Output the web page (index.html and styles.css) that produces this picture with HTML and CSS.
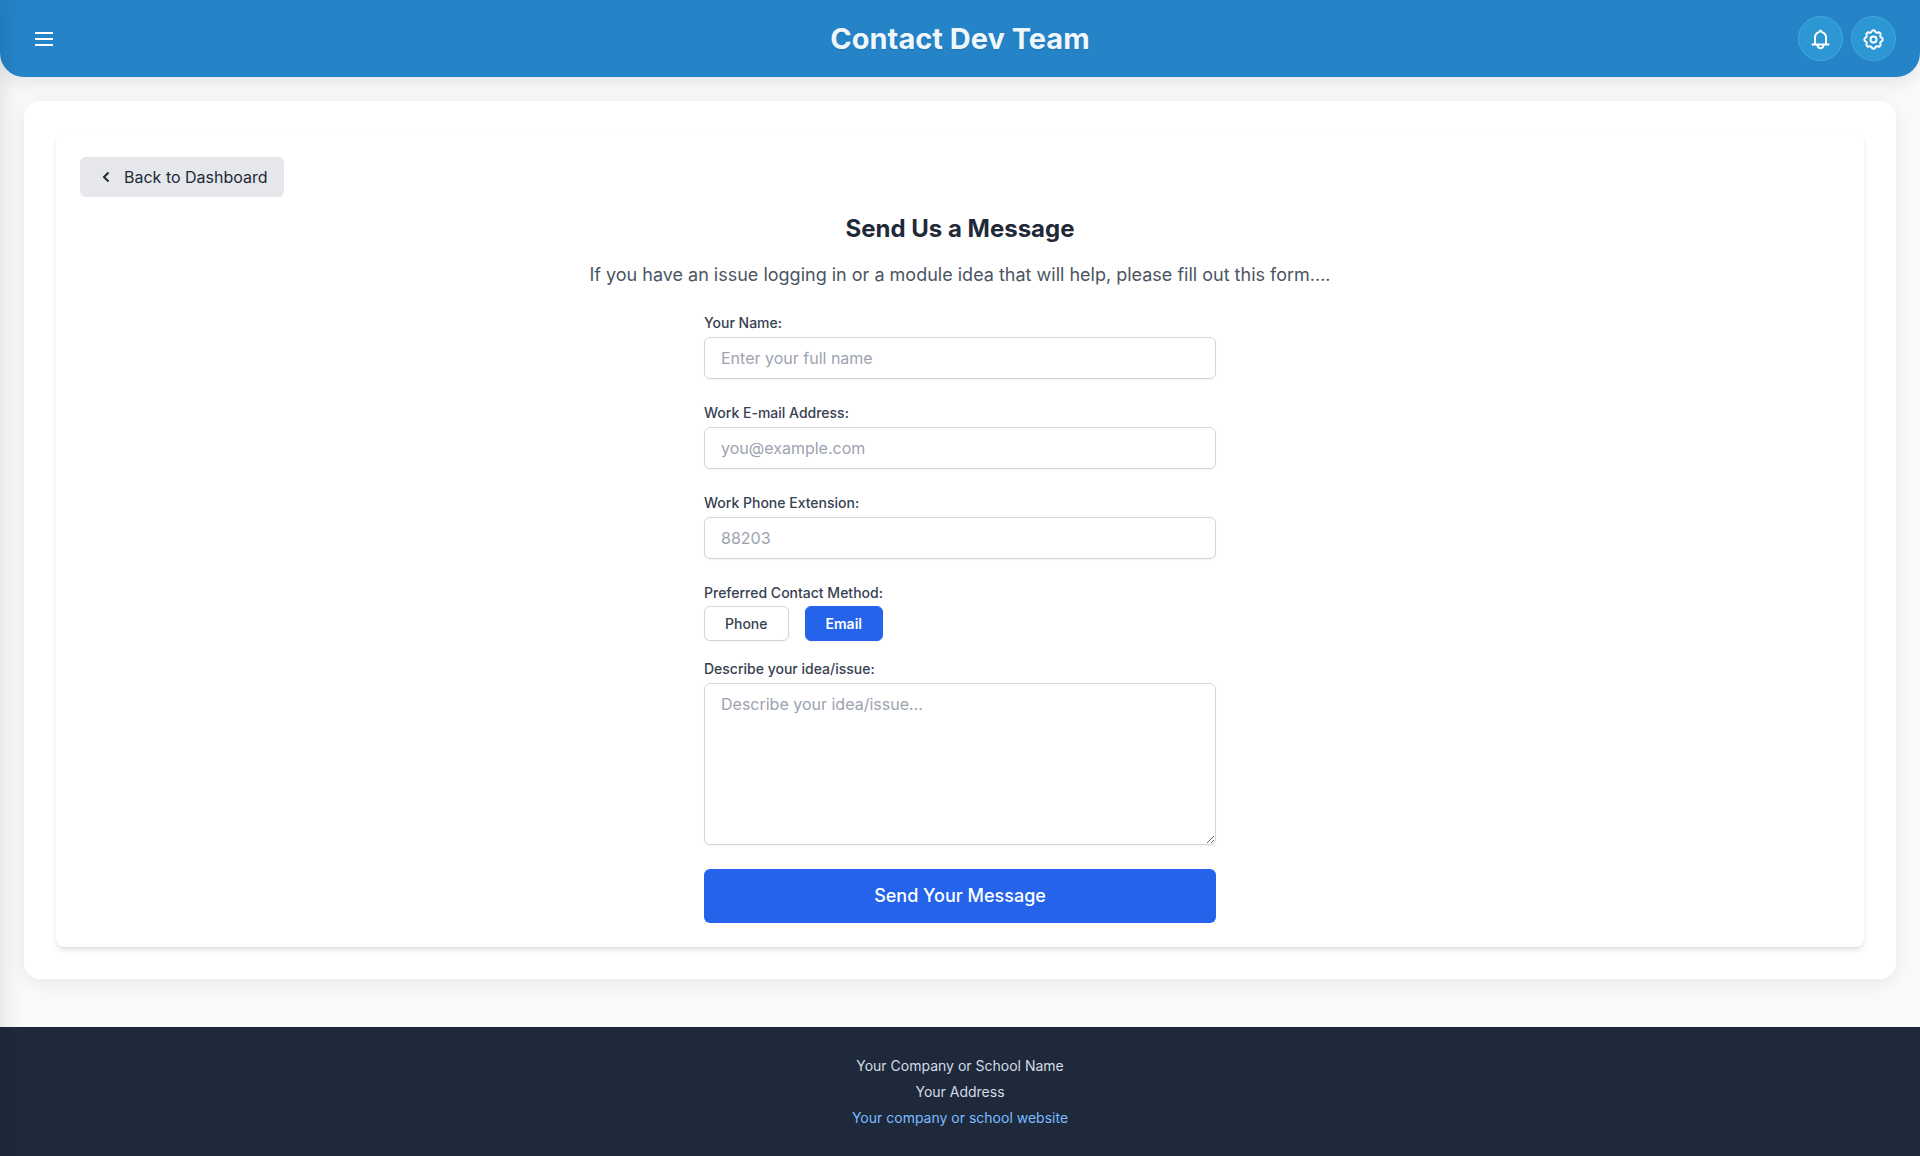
FILE: index.html
```html
<!doctype html>
<html lang="en">
<head>
	<meta charset="utf-8">
	<meta name="viewport" content="width=device-width, initial-scale=1">
	<title>Contact Dev Team</title>
	<link rel="stylesheet" href="styles.css">
</head>
<body>
	<aside class="sidebar" aria-hidden="true"></aside>

	<header class="header">
		<button class="menu-btn" type="button" aria-label="Open menu">
			<svg width="24" height="24" viewBox="0 0 24 24" fill="none" stroke="currentColor" stroke-width="2">
				<path d="M3 6h18M3 12h18M3 18h18"/>
			</svg>
		</button>
		<h1 class="header-title">Contact Dev Team</h1>
		<div class="header-actions">
			<button class="icon-btn" type="button" aria-label="Notifications">
				<svg width="24" height="24" viewBox="0.5 -0.5 24 24" fill="none" stroke="currentColor" stroke-width="2" stroke-linecap="round" stroke-linejoin="round">
					<path d="M4 17h16M6.500 17v-6.500C6.500 7.200 8.200 5.200 10.500 4.600L12 3l1.500 1.600C15.800 5.200 17.500 7.200 17.500 10.500V17M9 17.500a3 3.300 0 0 0 6 0"/>
				</svg>
			</button>
			<button class="icon-btn" type="button" aria-label="Settings">
				<svg width="24" height="24" viewBox="0.5 -0.5 24 24" fill="none" stroke="currentColor" stroke-width="2" stroke-linejoin="round">
					<path d="M10.160 4.010A2 2 0 0 1 13.840 4.010A1.800 1.800 0 0 0 16.350 5.050A2 2 0 0 1 18.950 7.650A1.800 1.800 0 0 0 19.990 10.160A2 2 0 0 1 19.990 13.840A1.800 1.800 0 0 0 18.950 16.350A2 2 0 0 1 16.350 18.950A1.800 1.800 0 0 0 13.840 19.990A2 2 0 0 1 10.160 19.990A1.800 1.800 0 0 0 7.650 18.950A2 2 0 0 1 5.050 16.350A1.800 1.800 0 0 0 4.010 13.840A2 2 0 0 1 4.010 10.160A1.800 1.800 0 0 0 5.050 7.650A2 2 0 0 1 7.650 5.050A1.800 1.800 0 0 0 10.160 4.010Z"/>
					<circle cx="12" cy="12" r="3"/>
				</svg>
			</button>
		</div>
	</header>

	<main class="container">
		<section class="card">
			<a class="back-btn" href="#">
				<svg width="20" height="20" viewBox="0 0 20 20" fill="none" stroke="currentColor" stroke-width="2">
					<path d="M12.500 5.500L8 10l4.500 4.500"/>
				</svg>
				Back to Dashboard
			</a>
			<h2 class="card-title">Send Us a Message</h2>
			<p class="card-intro">If you have an issue logging in or a module idea that will help, please fill out this form....</p>

			<form class="contact-form">
				<div class="field">
					<label for="name">Your Name:</label>
					<input type="text" id="name" name="name" placeholder="Enter your full name">
				</div>
				<div class="field">
					<label for="email">Work E-mail Address:</label>
					<input type="email" id="email" name="email" placeholder="you@example.com">
				</div>
				<div class="field">
					<label for="extension">Work Phone Extension:</label>
					<input type="text" id="extension" name="extension" placeholder="88203">
				</div>
				<div class="field field-method" role="group" aria-labelledby="method-label">
					<span class="label" id="method-label">Preferred Contact Method:</span>
					<div class="method-options">
						<button class="method-btn" type="button" aria-pressed="false">Phone</button>
						<button class="method-btn selected" type="button" aria-pressed="true">Email</button>
					</div>
				</div>
				<div class="field">
					<label for="message">Describe your idea/issue:</label>
					<textarea id="message" name="message" rows="6" placeholder="Describe your idea/issue..."></textarea>
				</div>
				<button class="submit-btn" type="submit">Send Your Message</button>
			</form>
		</section>
	</main>

	<footer class="footer">
		<p>Your Company or School Name</p>
		<p>Your Address</p>
		<p><a href="#">Your company or school website</a></p>
	</footer>
</body>
</html>
```
FILE: styles.css
```css
* {
	box-sizing: border-box;
	margin: 0;
	padding: 0;
}

body {
	display: flex;
	flex-direction: column;
	min-height: 100vh;
	font-family: "Inter", sans-serif;
	font-size: 16px;
	line-height: 24px;
	color: #1f2937;
	background: #f8fafc;
}

button, input, textarea {
	font: inherit;
}

button {
	border: none;
	cursor: pointer;
}

svg {
	display: block;
}

/* closed off-canvas menu, only its shadow reaches the page */
.sidebar {
	position: fixed;
	top: 0;
	bottom: 0;
	left: -280px;
	width: 280px;
	z-index: 10;
	box-shadow: 4px 0 20px rgba(0, 0, 0, 0.1);
}

.header {
	display: grid;
	grid-template-columns: 1fr auto 1fr;
	align-items: center;
	padding: 16px 24px;
	color: #fff;
	background: #2583c8;
	border-radius: 0 0 24px 24px;
	box-shadow: 0 4px 20px rgba(0, 0, 0, 0.1);
}

.menu-btn {
	justify-self: start;
	padding: 11px 8px 10px;
	color: #fff;
	background: none;
}

.header-title {
	font-size: 29px;
	font-weight: 700;
	line-height: 45px;
	color: #f0f7fc;
	text-shadow: 0 1px 2px rgba(0, 0, 0, 0.1);
}

.header-actions {
	display: flex;
	justify-content: flex-end;
	gap: 8px;
}

.icon-btn {
	display: flex;
	align-items: center;
	justify-content: center;
	width: 45px;
	height: 45px;
	color: #fff;
	background: #2d97d3;
	border: 1px solid #46a8da;
	border-radius: 50%;
}

.container {
	margin: 24px 24px 48px;
	padding: 32px;
	background: #fff;
	border-radius: 16px;
	box-shadow: 0 4px 20px rgba(0, 0, 0, 0.08);
}

.card {
	padding: 24px;
	background: #fff;
	border-radius: 8px;
	box-shadow: 0 4px 6px -1px rgba(0, 0, 0, 0.1), 0 2px 4px -2px rgba(0, 0, 0, 0.1);
}

.back-btn {
	display: flex;
	align-items: center;
	gap: 8px;
	width: fit-content;
	padding: 8px 16px;
	color: #1f2937;
	text-decoration: none;
	background: #e5e7eb;
	border-radius: 6px;
}

.card-title {
	margin: 16px 0;
	font-size: 24px;
	font-weight: 700;
	line-height: 32px;
	text-align: center;
}

.card-intro {
	margin-bottom: 24px;
	font-size: 18px;
	line-height: 28px;
	color: #4b5563;
	text-align: center;
}

.contact-form {
	display: flex;
	flex-direction: column;
	gap: 24px;
	max-width: 512px;
	margin: 0 auto;
}

.field {
	display: flex;
	flex-direction: column;
	gap: 4px;
}

.field label,
.label {
	font-size: 14px;
	font-weight: 500;
	line-height: 20px;
	color: #374151;
}

.field input,
.field textarea {
	width: 100%;
	padding: 8px 16px;
	color: #1f2937;
	background: #fff;
	border: 1px solid #d1d5db;
	border-radius: 6px;
	box-shadow: 0 1px 2px rgba(0, 0, 0, 0.05);
}

.field textarea {
	display: block;
	resize: vertical;
}

.field input::placeholder,
.field textarea::placeholder {
	color: #9ca3af;
}

.field-method {
	gap: 3px;
	margin-bottom: -6px;
}

.method-options {
	display: flex;
	gap: 16px;
}

.method-btn {
	padding: 7px 20px;
	font-size: 14px;
	font-weight: 500;
	line-height: 19px;
	color: #374151;
	background: #fff;
	border: 1px solid #d1d5db;
	border-radius: 6px;
	box-shadow: 0 1px 2px rgba(0, 0, 0, 0.05);
}

.method-btn.selected {
	font-weight: 600;
	color: #fff;
	background: #2563eb;
	border-color: #2563eb;
}

.submit-btn {
	padding: 13px 24px;
	font-size: 18px;
	font-weight: 500;
	line-height: 28px;
	color: #fff;
	background: #2563eb;
	border-radius: 6px;
}

.footer {
	margin-top: auto;
	padding: 26px 24px 25px;
	font-size: 14px;
	line-height: 26px;
	color: #d5dce5;
	text-align: center;
	background: #1e293b;
}

.footer a {
	color: #7cbcff;
	text-decoration: none;
}
```
